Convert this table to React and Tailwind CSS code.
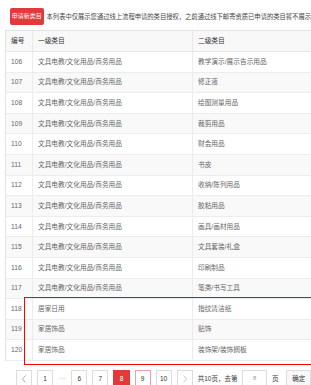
import React from 'react';

const rows = [
  [106, '文具电教/文化用品/商务用品', '教学演示/展示告示用品'],
  [107, '文具电教/文化用品/商务用品', '修正液'],
  [108, '文具电教/文化用品/商务用品', '绘图测量用品'],
  [109, '文具电教/文化用品/商务用品', '裁剪用品'],
  [110, '文具电教/文化用品/商务用品', '财会用品'],
  [111, '文具电教/文化用品/商务用品', '书皮'],
  [112, '文具电教/文化用品/商务用品', '收纳/陈列用品'],
  [113, '文具电教/文化用品/商务用品', '胶粘用品'],
  [114, '文具电教/文化用品/商务用品', '画具/画材用品'],
  [115, '文具电教/文化用品/商务用品', '文具套装/礼盒'],
  [116, '文具电教/文化用品/商务用品', '印刷制品'],
  [117, '文具电教/文化用品/商务用品', '笔类/书写工具'],
  [118, '居家日用', '指纹清洁纸'],
  [119, '家居饰品', '贴饰'],
  [120, '家居饰品', '装饰架/装饰搁板'],
];

const pages = ['1', '...', '6', '7', '8', '9', '10'];

const font = { fontFamily: '"Liberation Sans", "Noto Sans CJK SC", sans-serif' };

const PageBtn = ({ children, active, hover }) => (
  <div
    className={
      'w-[17px] h-[18px] flex items-center justify-center border text-[6.5px] ' +
      (active
        ? 'bg-[#e2393b] border-[#e2393b] text-white'
        : hover
        ? 'bg-white border-[#f0a0a2] text-[#333]'
        : 'bg-white border-[#dddddd] text-[#333]')
    }
  >
    {children}
  </div>
);

export default function App() {
  return (
    <div className="relative w-[311px] h-[385px] overflow-hidden bg-white" style={font}>
      <div className="flex items-center pt-[8px] pl-[10px] h-[25px] whitespace-nowrap">
        <div className="h-[17px] w-[43px] bg-[#e2393b] rounded-[2px] flex items-center justify-center text-white text-[6px]">
          申请新类目
        </div>
        <div className="ml-[3px] text-[6.3px] text-[#444]">
          本列表中仅展示您通过线上流程申请的类目授权，之前通过线下邮寄资质已申请的类目暂不展示
        </div>
      </div>

      <div className="mt-[5px] ml-[5px] w-[420px] border-l border-t border-[#e3e3e3] text-[6.7px] whitespace-nowrap">
        <div className="grid grid-cols-[27px_160px_1fr] h-[21px] bg-[#f8f8f8] border-b border-[#e8e8e8] text-[#333]">
          <div className="flex items-center pl-[5px] border-r border-[#e8e8e8]">编号</div>
          <div className="flex items-center pl-[5px] border-r border-[#e8e8e8]">一级类目</div>
          <div className="flex items-center pl-[5px]">二级类目</div>
        </div>
        {rows.map(([id, a, b], i) => (
          <div
            key={id}
            className={
              'grid grid-cols-[27px_160px_1fr] h-[20.6px] border-b border-[#ececec] text-[#666] ' +
              (i % 2 === 1 ? 'bg-[#f9f9f9]' : 'bg-white')
            }
          >
            <div className="flex items-center pl-[5px] border-r border-[#ececec]">{id}</div>
            <div className="flex items-center pl-[5px] border-r border-[#ececec]">{a}</div>
            <div className="flex items-center pl-[5px]">{b}</div>
          </div>
        ))}
      </div>

      <div className="absolute left-[24px] top-[297px] w-[300px] h-[68px] border-[1.5px] border-[#ff0000]" />

      <div className="flex items-center mt-[9px] ml-[16px] gap-[5px] whitespace-nowrap">
        <PageBtn>
          <svg width="6" height="8" viewBox="0 0 6 8" fill="none" stroke="#999" strokeWidth="0.8">
            <path d="M4.5 0.5 L1.5 4 L4.5 7.5" />
          </svg>
        </PageBtn>
        {pages.map(p =>
          p === '...' ? (
            <div key={p} className="w-[13px] text-center text-[#aaa] text-[6.5px] -ml-[2px] -mr-[2px]">···</div>
          ) : (
            <PageBtn key={p} active={p === '8'} hover={p === '9'}>{p}</PageBtn>
          )
        )}
        <PageBtn>
          <svg width="6" height="8" viewBox="0 0 6 8" fill="none" stroke="#bbb" strokeWidth="0.8">
            <path d="M1.5 0.5 L4.5 4 L1.5 7.5" />
          </svg>
        </PageBtn>
        <div className="text-[6.5px] text-[#333]">共10页，去第</div>
        <div className="w-[26px] h-[18px] border border-[#dddddd] flex items-center justify-center text-[6px] text-[#999]">8</div>
        <div className="text-[6.5px] text-[#333]">页</div>
        <div className="ml-[3px] w-[26px] h-[18px] border border-[#dddddd] bg-[#f7f7f7] flex items-center justify-center text-[6.5px] text-[#333]">确定</div>
      </div>
    </div>
  );
}
